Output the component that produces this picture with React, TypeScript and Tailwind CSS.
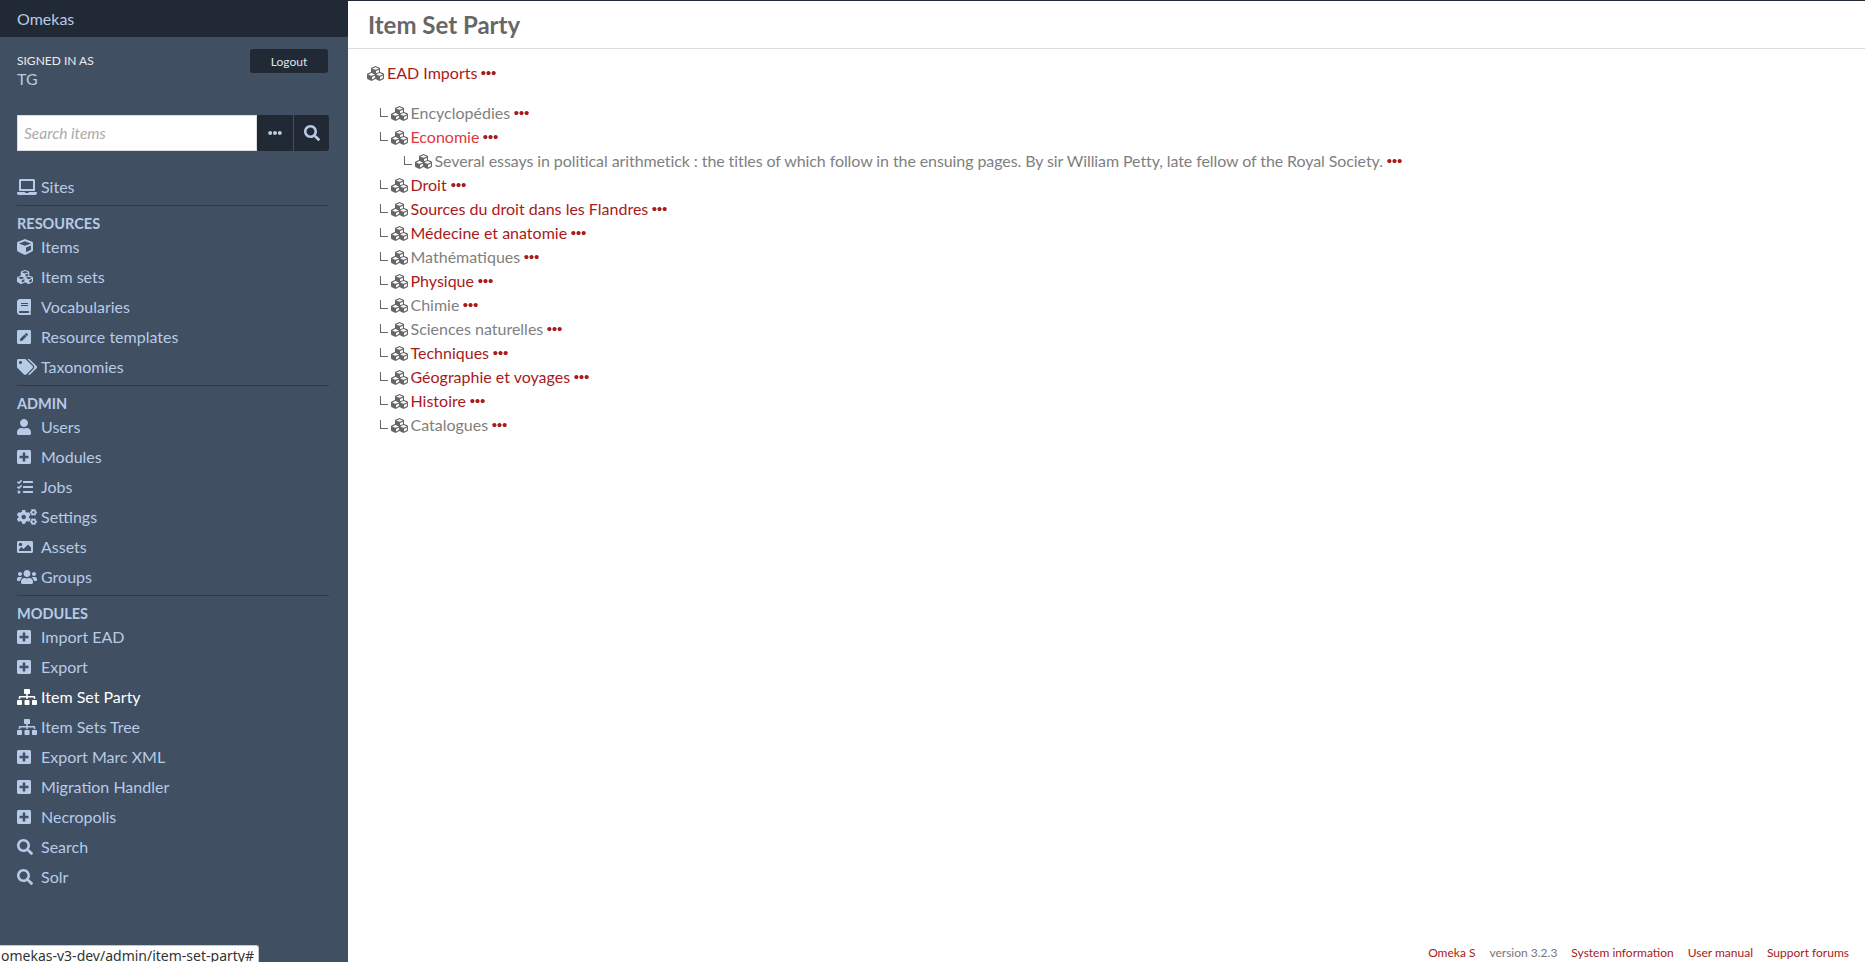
import type { IconType } from 'react-icons'
import {
  FaBook,
  FaCogs,
  FaCube,
  FaCubes,
  FaEllipsisH,
  FaImage,
  FaLaptop,
  FaPenSquare,
  FaPlusSquare,
  FaSearch,
  FaSitemap,
  FaTags,
  FaTasks,
  FaUser,
  FaUsers,
} from 'react-icons/fa'

type NavEntry = { label: string; icon: IconType; size: string; active?: boolean }

const wide = 'w-5 h-4'
const square = 'w-4 h-4'
const book = 'w-3.5 h-4'

const resources: NavEntry[] = [
  { label: 'Items', icon: FaCube, size: square },
  { label: 'Item sets', icon: FaCubes, size: square },
  { label: 'Vocabularies', icon: FaBook, size: book },
  { label: 'Resource templates', icon: FaPenSquare, size: book },
  { label: 'Taxonomies', icon: FaTags, size: wide },
]

const admin: NavEntry[] = [
  { label: 'Users', icon: FaUser, size: book },
  { label: 'Modules', icon: FaPlusSquare, size: book },
  { label: 'Jobs', icon: FaTasks, size: square },
  { label: 'Settings', icon: FaCogs, size: wide },
  { label: 'Assets', icon: FaImage, size: square },
  { label: 'Groups', icon: FaUsers, size: wide },
]

const modules: NavEntry[] = [
  { label: 'Import EAD', icon: FaPlusSquare, size: book },
  { label: 'Export', icon: FaPlusSquare, size: book },
  { label: 'Item Set Party', icon: FaSitemap, size: wide, active: true },
  { label: 'Item Sets Tree', icon: FaSitemap, size: wide },
  { label: 'Export Marc XML', icon: FaPlusSquare, size: book },
  { label: 'Migration Handler', icon: FaPlusSquare, size: book },
  { label: 'Necropolis', icon: FaPlusSquare, size: book },
  { label: 'Search', icon: FaSearch, size: square },
  { label: 'Solr', icon: FaSearch, size: square },
]

type TreeEntry = { label: string; tone: 'link' | 'muted' | 'hover'; depth?: number; tight?: boolean }

const tree: TreeEntry[] = [
  { label: 'Encyclopédies', tone: 'muted' },
  { label: 'Economie', tone: 'hover' },
  {
    label:
      'Several essays in political arithmetick : the titles of which follow in the ensuing pages. By sir William Petty, late fellow of the Royal Society.',
    tone: 'muted',
    depth: 1,
    tight: true,
  },
  { label: 'Droit', tone: 'link' },
  { label: 'Sources du droit dans les Flandres', tone: 'link' },
  { label: 'Médecine et anatomie', tone: 'link' },
  { label: 'Mathématiques', tone: 'muted' },
  { label: 'Physique', tone: 'link' },
  { label: 'Chimie', tone: 'muted' },
  { label: 'Sciences naturelles', tone: 'muted' },
  { label: 'Techniques', tone: 'link' },
  { label: 'Géographie et voyages', tone: 'link' },
  { label: 'Histoire', tone: 'link' },
  { label: 'Catalogues', tone: 'muted' },
]

const tones = {
  link: 'text-[#a91919]',
  muted: 'text-[#7f7f7f]',
  hover: 'text-[#e0383e]',
}

function NavItem({ label, icon: Icon, size, active }: NavEntry) {
  return (
    <a href="#" className={`flex h-[30px] items-center ${active ? 'text-white' : 'text-[#b7cbe6]'}`}>
      <span className="w-[24px] shrink-0">
        <Icon className={size} />
      </span>
      {label}
    </a>
  )
}

function NavGroup({ title, items }: { title: string; items: NavEntry[] }) {
  return (
    <div className="border-t border-[#2f3b4a] pt-[9px] pb-[3px]">
      <h4 className="h-[17px] text-[14.5px] leading-[18px] font-bold text-[#b7cbe6]">{title}</h4>
      {items.map((item) => (
        <NavItem key={item.label} {...item} />
      ))}
    </div>
  )
}

function Dots() {
  return <FaEllipsisH className="ml-[4px] h-4 w-[15px] text-[#a91919]" />
}

function TreeRow({ label, tone, depth = 0, tight }: TreeEntry) {
  return (
    <div className={`flex h-[24px] items-center ${depth ? 'pl-[24px]' : ''}`}>
      <span className="mr-[3px] mb-[2px] ml-[12px] h-[9px] w-[8px] border-b border-l border-[#666666]" />
      <FaCubes className="mr-[2.5px] h-[17px] w-[17px] text-[#666666]" />
      <a href="#" className={`${tones[tone]} ${tight ? 'tracking-[-0.09px]' : ''}`}>
        {label}
      </a>
      <Dots />
    </div>
  )
}

export default function App() {
  return (
    <div className="relative flex h-[962px] overflow-hidden bg-white font-['Lato',sans-serif] text-base">
      <aside className="flex w-[348px] shrink-0 flex-col bg-[#404f62]">
        <div className="flex h-[37px] items-center bg-[#212934] px-[17px] text-[#b7cbe6]">Omekas</div>

        <div className="flex flex-col pr-[19px] pl-[17px]">
          <div className="flex justify-between pt-[12px]">
            <div className="pt-[3px]">
              <p className="text-[12px] leading-[18px] text-white/90">SIGNED IN AS</p>
              <p className="text-[16px] leading-[18px] text-[#b7cbe6]">TG</p>
            </div>
            <a
              href="#"
              className="mr-px flex h-[24px] w-[78px] items-center justify-center rounded-[3px] bg-[#212934] pt-px text-[12px] text-[#dbe5f3]"
            >
              Logout
            </a>
          </div>

          <form className="mt-[27px] flex h-[36px]">
            <input
              placeholder="Search items"
              className="h-full w-[240px] border border-[#dddddd] bg-white px-[6px] text-[15.5px] text-[#555555] italic outline-none placeholder:text-[#aaaaaa]"
            />
            <button type="button" className="flex w-[36px] items-center justify-center bg-[#212934] text-[#b7cbe6]">
              <FaEllipsisH className="h-4 w-[14px]" />
            </button>
            <button
              type="button"
              className="ml-px flex w-[35px] items-center justify-center rounded-r-[3px] bg-[#212934] text-[#b7cbe6]"
            >
              <FaSearch className="h-4 w-4" />
            </button>
          </form>

          <div className="mt-[21px] pb-[3px]">
            <NavItem label="Sites" icon={FaLaptop} size={wide} />
          </div>
          <NavGroup title="RESOURCES" items={resources} />
          <NavGroup title="ADMIN" items={admin} />
          <NavGroup title="MODULES" items={modules} />
        </div>
      </aside>

      <main className="flex min-w-0 flex-1 flex-col border-t border-[#212934]">
        <h1 className="h-[48px] border-b border-[#dddddd] px-[20px] text-[24px] leading-[47px] font-bold text-[#676767]">
          Item Set Party
        </h1>

        <div className="px-[20px] pt-[12px]">
          <div className="flex h-[24px] items-center">
            <FaCubes className="-ml-px mr-[3px] h-[17px] w-[17px] text-[#666666]" />
            <a href="#" className="text-[#a91919]">
              EAD Imports
            </a>
            <Dots />
          </div>
          <div className="mt-[16px]">
            {tree.map((row) => (
              <TreeRow key={row.label} {...row} />
            ))}
          </div>
        </div>

        <footer className="mt-auto flex h-[18px] items-center justify-end gap-[14px] pr-[16px] text-[12px] text-[#a91919]">
          <a href="#">Omeka S</a>
          <span className="text-[#777777]">version 3.2.3</span>
          <a href="#">System information</a>
          <a href="#">User manual</a>
          <a href="#">Support forums</a>
        </footer>
      </main>

      <div className="absolute bottom-0 left-0 h-[17px] overflow-hidden rounded-tr-[3px] border-t border-r border-[#c8c8c8] bg-white pr-[4px] pl-[1px] font-['Noto_Sans',sans-serif] text-[14px] leading-[20px] text-[#333333]">
        omekas-v3-dev/admin/item-set-party#
      </div>
    </div>
  )
}
